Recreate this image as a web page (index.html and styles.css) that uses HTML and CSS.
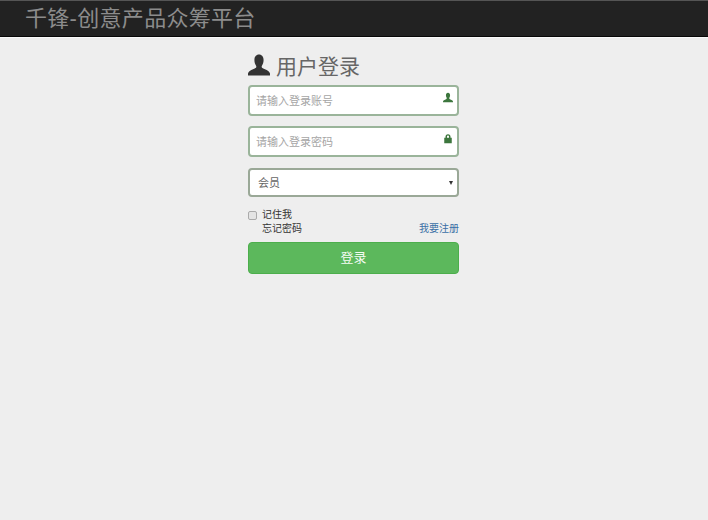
FILE: index.html
```
<!DOCTYPE html>
<html lang="zh-CN">
<head>
<meta charset="utf-8">
<title>千锋-创意产品众筹平台</title>
<link rel="stylesheet" href="styles.css">
</head>
<body>
<header class="topbar"><span class="brand">千锋-创意产品众筹平台</span></header>
<main class="page">
  <form class="login">
    <h2 class="heading">
      <svg class="heading-icon" viewBox="0 0 24 24"><path d="M12 .5c-3.200 0-5 2.600-5 6 0 2.500.8 4.800 1.800 6.300.5.800.4 2-.5 2.600-2.300 1.300-7.500 2.500-8.300 6v2.100h24v-2.100c-.8-3.500-6-4.700-8.300-6-.9-.6-1-1.800-.5-2.600C16.200 11.300 17 9 17 6.500c0-3.400-1.800-6-5-6z"/></svg>
      <span>用户登录</span>
    </h2>
    <div class="field">
      <input class="control" type="text" placeholder="请输入登录账号">
      <svg class="field-icon" viewBox="0 0 24 24"><path d="M12 .5c-3.200 0-5 2.600-5 6 0 2.500.8 4.800 1.800 6.300.5.800.4 2-.5 2.600-2.300 1.300-7.500 2.500-8.300 6v2.100h24v-2.100c-.8-3.500-6-4.700-8.300-6-.9-.6-1-1.800-.5-2.600C16.200 11.300 17 9 17 6.500c0-3.400-1.800-6-5-6z"/></svg>
    </div>
    <div class="field field-wide">
      <input class="control" type="password" placeholder="请输入登录密码">
      <svg class="field-icon" viewBox="0 0 24 24"><path d="M6 10V7.500a6 6 0 0 1 12 0V10h3v13.500H3V10h3zm3.500 0h5V7.500a2.500 2.500 0 0 0-5 0V10z"/></svg>
    </div>
    <div class="field field-select">
      <select class="control select"><option>会员</option></select>
    </div>
    <div class="options">
      <label class="remember"><input class="check" type="checkbox"><span>记住我</span></label>
      <div class="links"><span class="forgot">忘记密码</span><a class="register" href="#">我要注册</a></div>
    </div>
    <button class="submit" type="button">登录</button>
  </form>
</main>
</body>
</html>
```
FILE: styles.css
```
* { box-sizing: border-box; }
html, body { height: 100%; }
body {
  margin: 0;
  background: #eee;
  font-family: "Liberation Sans", "Noto Sans CJK SC", sans-serif;
  font-size: 11px;
  color: #333;
  display: flex;
  flex-direction: column;
}
.topbar {
  flex: none;
  height: 37px;
  background: #222;
  border-top: 1px solid #555;
  border-bottom: 1px solid #080808;
  padding-left: 25px;
  display: flex;
  align-items: center;
}
.brand { font-size: 22px; letter-spacing: .3px; color: #8c8c8c; line-height: 32px; }
.page {
  flex: 1;
  display: flex;
  justify-content: center;
  padding-right: 1px;
  border-top: 1px solid #fafafa;
}
.login { width: 211px; margin-top: 13px; }
.heading {
  margin: 0 0 5px;
  height: 29px;
  padding-bottom: 2px;
  display: flex;
  align-items: center;
  gap: 6px;
  font-size: 21px;
  font-weight: 400;
  color: #666;
}
.heading-icon { width: 22px; height: 24px; fill: #333; }
.field { position: relative; margin-bottom: 10px; }
.field-wide { margin-bottom: 11px; }
.field-select::after {
  content: "";
  position: absolute;
  top: 13px;
  right: 6px;
  border-style: solid;
  border-width: 4px 2.500px 0;
  border-color: #333 transparent transparent;
}
.control {
  display: block;
  width: 100%;
  height: 31px;
  padding: 0 6px;
  background: #fff;
  border: 2px solid #9ab49a;
  border-radius: 4px;
  font: inherit;
  font-size: 11px;
  color: #666;
  outline: none;
}
.control::placeholder { color: #a5a5a5; opacity: 1; }
.select {
  height: 29px;
  padding-left: 8px;
  border-color: #9aa897;
  appearance: none;
}
.field-icon {
  position: absolute;
  top: 7px;
  right: 6px;
  width: 10px;
  height: 11px;
  fill: #3c763d;
}
.options { margin-top: 11px; font-size: 10px; line-height: 14px; }
.remember { display: flex; align-items: center; gap: 5px; color: #333; }
.check {
  appearance: none;
  width: 9px;
  height: 9px;
  margin: 0;
  background: #e4e4e4;
  border: 1px solid #aaa;
  border-radius: 2px;
}
.links { display: flex; justify-content: space-between; padding-left: 14px; }
.register { color: #3a6ea5; text-decoration: none; }
.submit {
  display: block;
  width: 100%;
  height: 32px;
  margin-top: 6px;
  padding: 0 0 3px;
  background: #5cb85c;
  border: 1px solid #4cae4c;
  border-radius: 4px;
  color: #f4fbf4;
  font: inherit;
  font-size: 13px;
}
```
